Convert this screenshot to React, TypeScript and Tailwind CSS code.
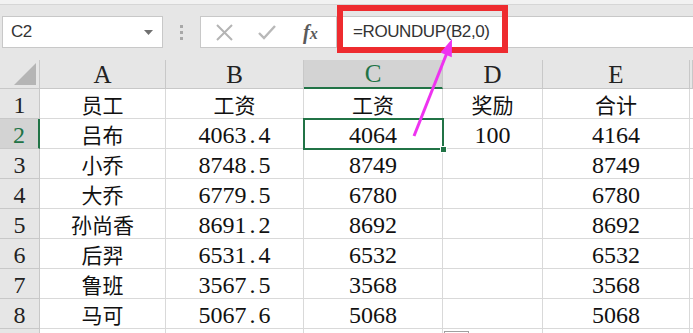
import React from "react";

const CJK = "font-['Noto_Sans_CJK_SC','Noto_Sans',sans-serif]";
const SERIF = "font-['Liberation_Serif','Noto_Sans_CJK_SC',serif]";

const rows: string[][] = [
  ["员工", "工资", "工资", "奖励", "合计"],
  ["吕布", "4063.4", "4064", "100", "4164"],
  ["小乔", "8748.5", "8749", "", "8749"],
  ["大乔", "6779.5", "6780", "", "6780"],
  ["孙尚香", "8691.2", "8692", "", "8692"],
  ["后羿", "6531.4", "6532", "", "6532"],
  ["鲁班", "3567.5", "3568", "", "3568"],
  ["马可", "5067.6", "5068", "", "5068"],
  ["", "", "", "", ""],
];

const letters = ["A", "B", "C", "D", "E", ""];

function Num({ text }: { text: string }) {
  return (
    <span className={`${SERIF} text-[24px] leading-none text-[#111]`}>
      {text.split("").map((ch, i) =>
        ch === "." ? (
          <span key={i} className="inline-block w-[12px] text-center">
            .
          </span>
        ) : (
          <span key={i}>{ch}</span>
        )
      )}
    </span>
  );
}

function CellText({ text }: { text: string }) {
  if (!text) return null;
  if (/^[\d.]+$/.test(text)) return <Num text={text} />;
  return <span className={`${CJK} text-[21px] leading-none text-[#111]`}>{text}</span>;
}

export default function App() {
  return (
    <div className="relative w-[693px] h-[333px] overflow-hidden bg-white">
      {/* Formula toolbar */}
      <div className="h-[60px] bg-[#e6e6e6] flex flex-col">
        <div className="h-[5px] bg-[#f2f2f2] border-b border-[#d6d6d6]" />
        <div className="mt-[11px] h-[32px] flex items-stretch">
          <div className="ml-[2px] w-[161px] bg-white border border-[#c8c8c8] flex items-center justify-between pl-[8px] pr-[9px]">
            <span className="font-['Liberation_Sans',sans-serif] text-[17px] text-[#333] tracking-[-0.5px]">C2</span>
            <svg width="9" height="5" viewBox="0 0 9 5">
              <path d="M0 0 L9 0 L4.5 5 Z" fill="#707070" />
            </svg>
          </div>
          <div className="w-[37px] flex flex-col items-center justify-center gap-[3px]">
            <div className="w-[3px] h-[3px] bg-[#a8a8a8]" />
            <div className="w-[3px] h-[3px] bg-[#a8a8a8]" />
            <div className="w-[3px] h-[3px] bg-[#a8a8a8]" />
          </div>
          <div className="w-[137px] bg-white border border-[#c8c8c8] flex items-center pl-[15px]">
            <svg width="17" height="17" viewBox="0 0 17 17" className="mr-[25px]">
              <path d="M1 1 L16 16 M16 1 L1 16" stroke="#b4b4b4" strokeWidth="2" />
            </svg>
            <svg width="18" height="15" viewBox="0 0 18 15" className="mr-[27px]">
              <path d="M1 8 L6 13 L17 1" stroke="#b8b8b8" strokeWidth="2.4" fill="none" />
            </svg>
            <span className="font-['Liberation_Serif',serif] italic font-bold text-[20px] text-[#5a5a5a] leading-none">
              f<span className="text-[16px]">x</span>
            </span>
          </div>
          <div className="flex-1 bg-white border-y border-[#c8c8c8] flex items-center pl-[16px]">
            <span className="font-['Liberation_Sans',sans-serif] text-[17px] text-[#333] tracking-[-0.4px]">
              =ROUNDUP(B2,0)
            </span>
          </div>
        </div>
      </div>

      {/* Grid */}
      <div className="grid grid-cols-[40px_126px_138px_139px_100px_147px_1fr] grid-rows-[29px_repeat(9,30px)]">
        {/* header row */}
        <div className="relative bg-[#e6e6e6] border-r border-b border-[#c8c8c8]">
          <svg width="22" height="22" viewBox="0 0 22 22" className="absolute right-[3px] bottom-[3px]">
            <path d="M22 0 L22 22 L0 22 Z" fill="#b5b5b5" />
          </svg>
        </div>
        {letters.map((l, i) =>
          i === 2 ? (
            <div
              key={i}
              className={`bg-[#d3d3d3] border-r border-[#c8c8c8] border-b-2 border-b-[#217346] flex items-center justify-center pt-[1px] ${SERIF} text-[25px] text-[#217346]`}
            >
              {l}
            </div>
          ) : (
            <div
              key={i}
              className={`bg-[#e6e6e6] border-r border-b border-[#c8c8c8] flex items-center justify-center pt-[2px] ${SERIF} text-[25px] text-[#222]`}
            >
              {l}
            </div>
          )
        )}

        {rows.map((r, ri) => (
          <React.Fragment key={ri}>
            {ri === 1 ? (
              <div className={`bg-[#d3d3d3] border-b border-[#c8c8c8] border-r-2 border-r-[#217346] flex items-center justify-center pt-[2px] ${SERIF} text-[24px] text-[#217346]`}>
                {ri + 1}
              </div>
            ) : (
              <div className={`bg-[#e6e6e6] border-r border-b border-[#c8c8c8] flex items-center justify-center pt-[2px] ${SERIF} text-[24px] text-[#222]`}>
                {ri < 8 ? ri + 1 : ""}
              </div>
            )}
            {r.map((c, ci) => (
              <div
                key={ci}
                className="relative border-r border-b border-[#d9d9d9] flex items-center justify-center pt-[2px]"
              >
                <CellText text={c} />
                {ri === 1 && ci === 2 && (
                  <div className="absolute z-10 left-[-1px] top-[-1px] w-[141px] h-[32px] border-2 border-[#217346]">
                    <div className="absolute right-[-5px] bottom-[-5px] w-[7px] h-[7px] bg-[#217346] border border-white" />
                  </div>
                )}
              </div>
            ))}
            <div className="border-b border-[#d9d9d9]" />
          </React.Fragment>
        ))}
      </div>

      {/* paste option tag peeking at bottom */}
      <div className="absolute left-[444px] top-[331px] w-[25px] h-[8px] border border-[#a0a0a0] bg-white" />

      {/* Annotation: red box */}
      <div className="absolute z-20 left-[337px] top-[5px] w-[171px] h-[48px] border-[6px] border-[#ee2b2f]" />

      {/* Annotation: magenta arrow */}
      <svg className="absolute z-20 left-0 top-0 pointer-events-none" width="693" height="333" viewBox="0 0 693 333">
        <line x1="414" y1="136" x2="446.5" y2="54" stroke="#ee33f0" strokeWidth="3" />
        <path d="M452 39 L451.8 57.2 L440.5 52.6 Z" fill="#ee33f0" />
      </svg>
    </div>
  );
}
